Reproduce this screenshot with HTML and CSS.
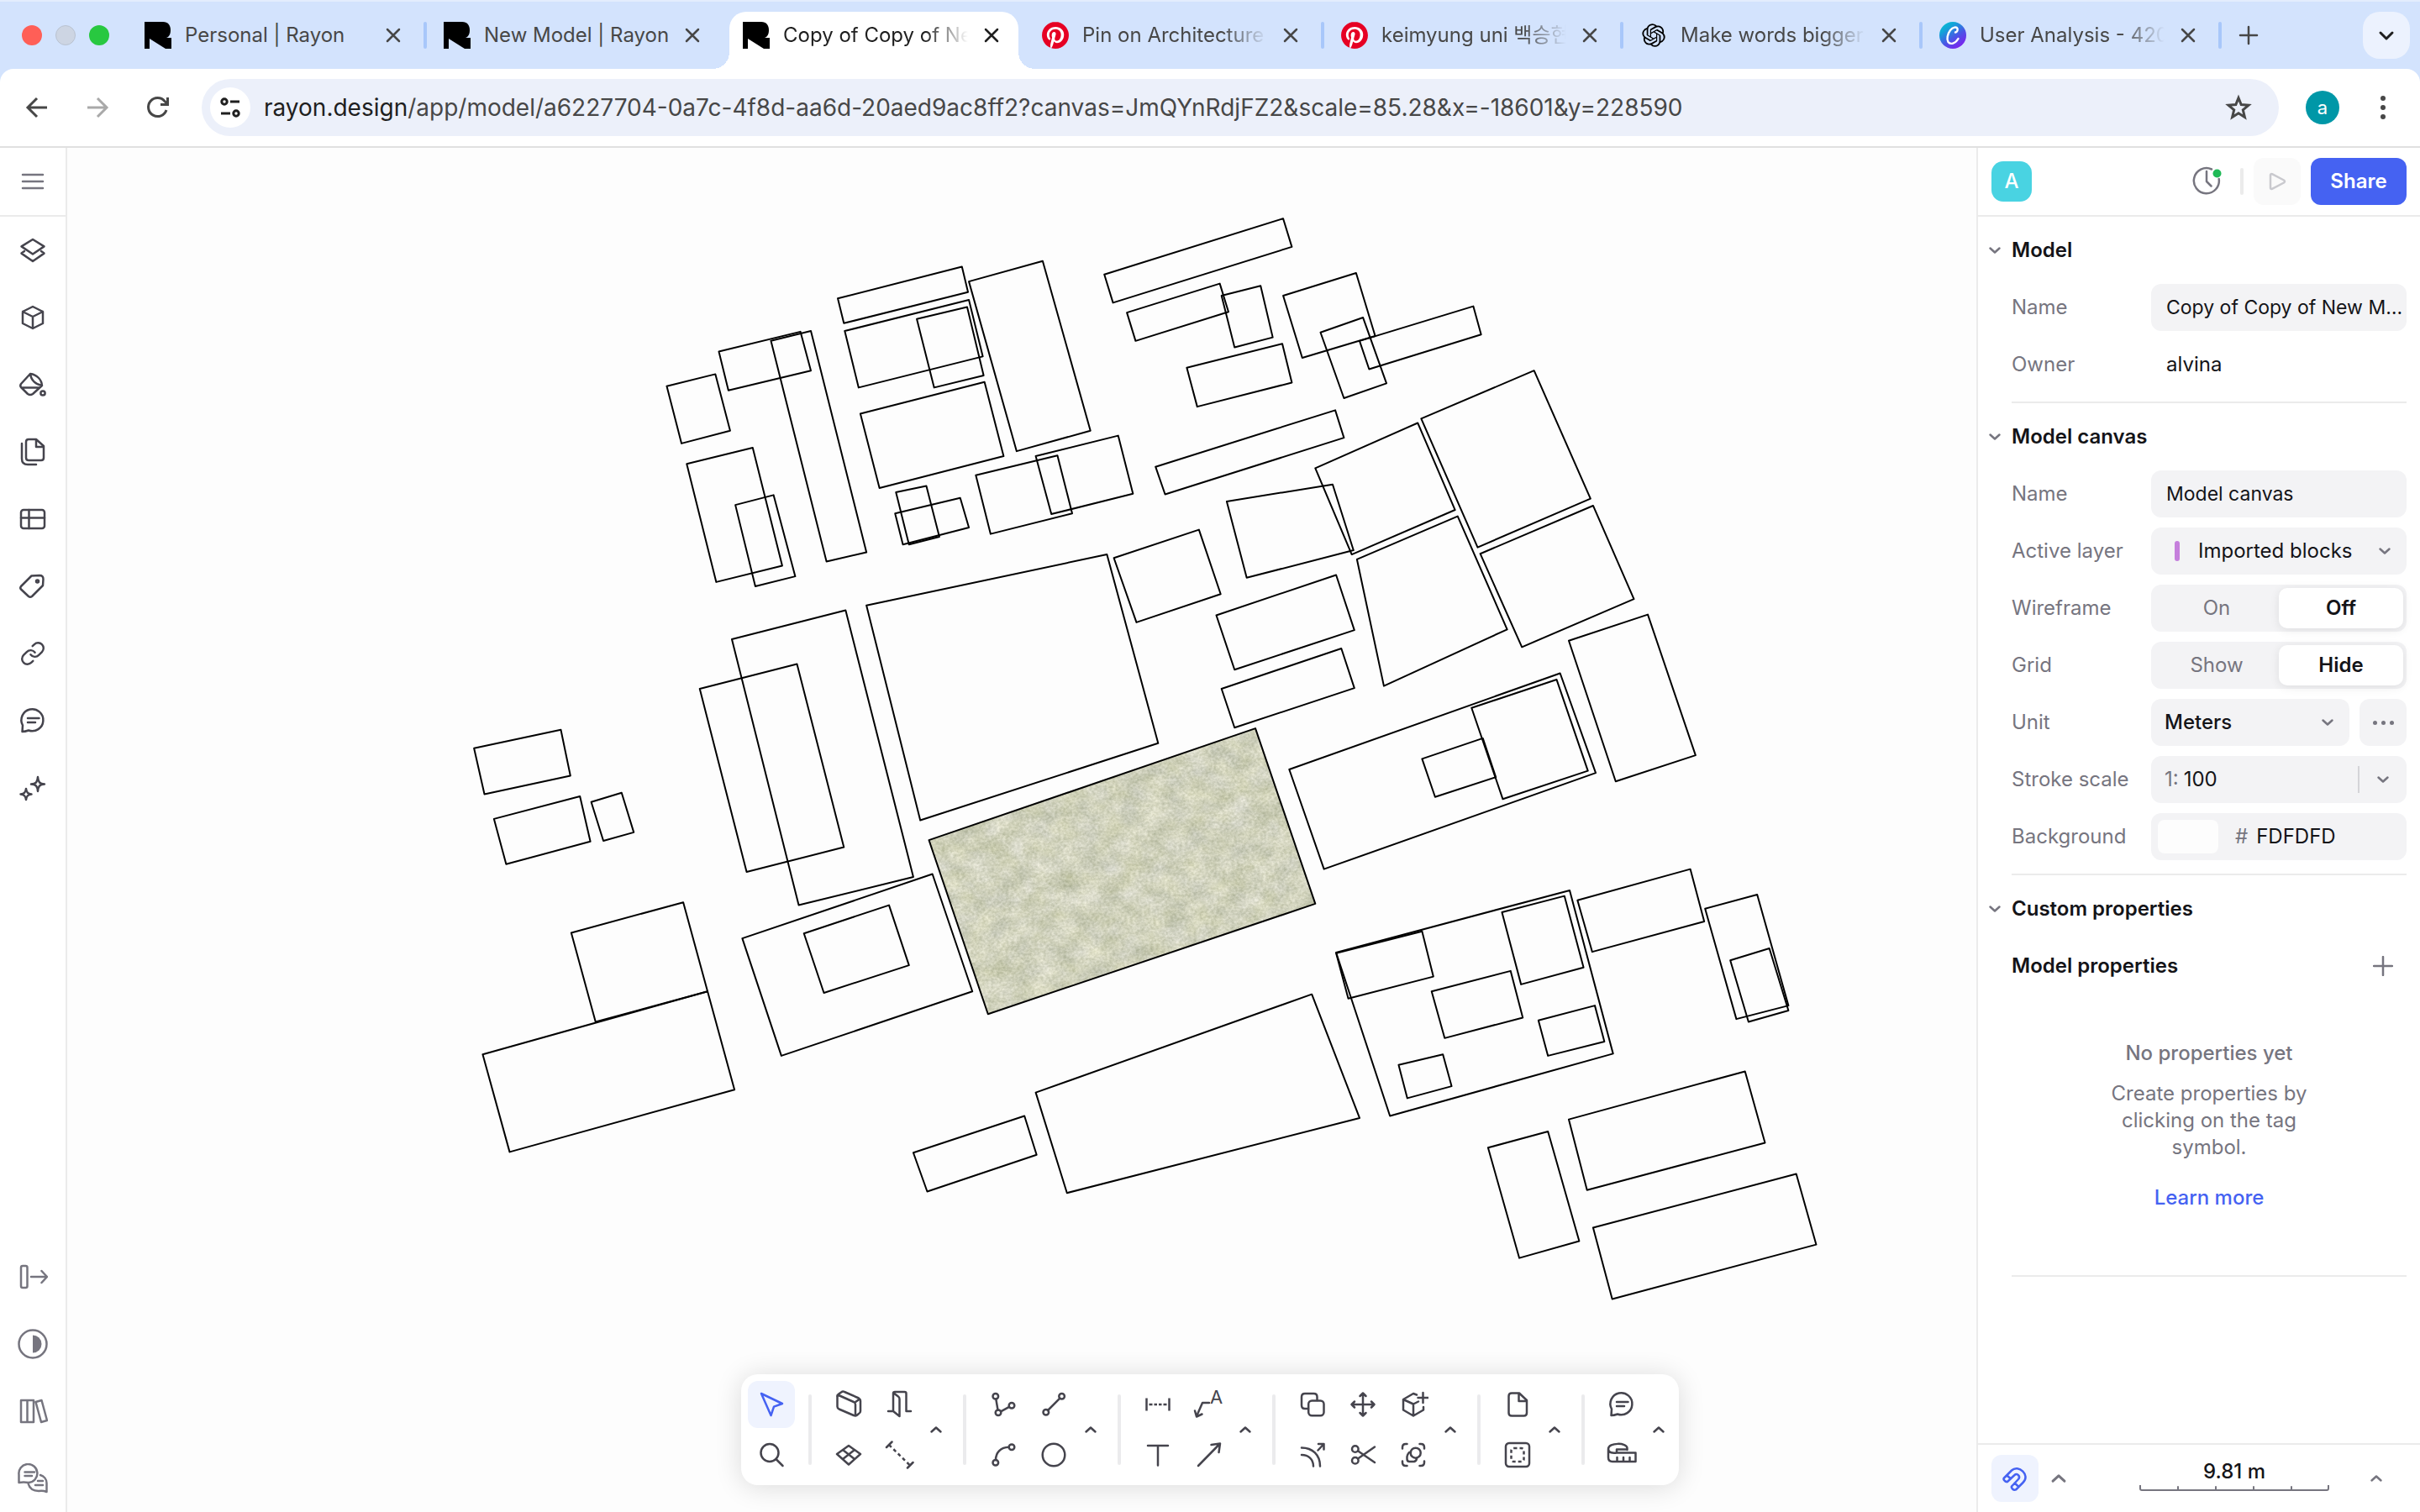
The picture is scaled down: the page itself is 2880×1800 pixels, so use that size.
FILE: index.html
```html
<!DOCTYPE html>
<html lang="en">
<head>
<meta charset="utf-8">
<title>Copy of Copy of New Model | Rayon</title>
<link rel="stylesheet" href="styles.css">
</head>
<body>
<svg class="defs" aria-hidden="true">
  <defs>
    <symbol id="i-close" viewBox="0 0 20 20"><path d="M3 3L17 17M17 3L3 17"/></symbol>
    <symbol id="i-down" viewBox="0 0 16 16"><path d="M2.500 5.500L8 10.500L13.500 5.500"/></symbol>
    <symbol id="i-up" viewBox="0 0 16 16"><path d="M2.500 10.500L8 5.500L13.500 10.500"/></symbol>
    <symbol id="i-chat" viewBox="0 0 36 36"><path d="M5.500 31L6 23.500A13 13 0 1 1 13 29.500Q9 31 5.500 31ZM12 15H25.500M12 20H21"/></symbol>
    <symbol id="i-rayon" viewBox="0 0 32 32"><path fill="#000" stroke="none" d="M0 0H22C28 0 31 4 31 10C31 15 29 18 26 19H32V32H25L6 20V32H0Z"/></symbol>
    <symbol id="i-pin" viewBox="0 0 24 24"><circle cx="12" cy="12" r="11.500" fill="#fff" stroke="none"/><path fill="#e60023" stroke="none" d="M12.017 0C5.396 0 .029 5.367.029 11.987c0 5.079 3.158 9.417 7.618 11.162-.105-.949-.199-2.403.041-3.439.219-.937 1.406-5.957 1.406-5.957s-.359-.72-.359-1.781c0-1.663.967-2.911 2.168-2.911 1.024 0 1.518.769 1.518 1.688 0 1.029-.653 2.567-.992 3.992-.285 1.193.6 2.165 1.775 2.165 2.128 0 3.768-2.245 3.768-5.487 0-2.861-2.063-4.869-5.008-4.869-3.41 0-5.409 2.562-5.409 5.199 0 1.033.394 2.143.889 2.741.099.12.112.225.085.345-.09.375-.293 1.199-.334 1.363-.053.225-.172.271-.401.165-1.495-.69-2.433-2.878-2.433-4.646 0-3.776 2.748-7.252 7.92-7.252 4.158 0 7.392 2.967 7.392 6.923 0 4.135-2.607 7.462-6.233 7.462-1.214 0-2.354-.629-2.758-1.379l-.749 2.848c-.269 1.045-1.004 2.352-1.498 3.146 1.123.345 2.306.535 3.55.535 6.607 0 11.985-5.365 11.985-11.987C23.97 5.39 18.592.026 11.985.026L12.017 0z"/></symbol>
    <linearGradient id="canva" x1="0" y1="0" x2="0.700" y2="1"><stop offset="0" stop-color="#00c9d0"/><stop offset="0.300" stop-color="#12a5d8"/><stop offset="0.650" stop-color="#4a55e6"/><stop offset="1" stop-color="#7d22ee"/></linearGradient>
  </defs>
</svg>

<header class="browser">
  <nav class="tabs" aria-label="Tabs">
    <div class="lights"><span class="light red"></span><span class="light grey"></span><span class="light green"></span></div>
    <div class="tab"><svg class="fav"><use href="#i-rayon"/></svg><span class="title">Personal | Rayon</span><button class="close" aria-label="Close tab"><svg class="ic20"><use href="#i-close"/></svg></button></div>
    <div class="tab bare"><svg class="fav"><use href="#i-rayon"/></svg><span class="title">New Model | Rayon</span><button class="close" aria-label="Close tab"><svg class="ic20"><use href="#i-close"/></svg></button></div>
    <div class="tab active"><svg class="fav"><use href="#i-rayon"/></svg><span class="title fade">Copy of Copy of New Model</span><button class="close" aria-label="Close tab"><svg class="ic20"><use href="#i-close"/></svg></button></div>
    <div class="tab"><svg class="fav"><use href="#i-pin"/></svg><span class="title fade">Pin on Architecture</span><button class="close" aria-label="Close tab"><svg class="ic20"><use href="#i-close"/></svg></button></div>
    <div class="tab"><svg class="fav"><use href="#i-pin"/></svg><span class="title fade">keimyung uni 백승현</span><button class="close" aria-label="Close tab"><svg class="ic20"><use href="#i-close"/></svg></button></div>
    <div class="tab"><svg class="fav" viewBox="-2 -2 28 28"><path fill="#000" stroke="none" d="M22.2819 9.8211a5.9847 5.9847 0 0 0-.5157-4.9108 6.0462 6.0462 0 0 0-6.5098-2.9A6.0651 6.0651 0 0 0 4.9807 4.1818a5.9847 5.9847 0 0 0-3.9977 2.9 6.0462 6.0462 0 0 0 .7427 7.0966 5.98 5.98 0 0 0 .511 4.9107 6.051 6.051 0 0 0 6.5146 2.9001A5.9847 5.9847 0 0 0 13.2599 24a6.0557 6.0557 0 0 0 5.7718-4.2058 5.9894 5.9894 0 0 0 3.9977-2.9001 6.0557 6.0557 0 0 0-.7475-7.0729zm-9.022 12.6081a4.4755 4.4755 0 0 1-2.8764-1.0408l.1419-.0804 4.7783-2.7582a.7948.7948 0 0 0 .3927-.6813v-6.7369l2.02 1.1686a.071.071 0 0 1 .038.052v5.5826a4.504 4.504 0 0 1-4.4945 4.4944zm-9.6607-4.1254a4.4708 4.4708 0 0 1-.5346-3.0137l.142.0852 4.783 2.7582a.7712.7712 0 0 0 .7806 0l5.8428-3.3685v2.3324a.0804.0804 0 0 1-.0332.0615L9.74 19.9502a4.4992 4.4992 0 0 1-6.1408-1.6464zM2.3408 7.8956a4.485 4.485 0 0 1 2.3655-1.9728V11.6a.7664.7664 0 0 0 .3879.6765l5.8144 3.3543-2.0201 1.1685a.0757.0757 0 0 1-.071 0l-4.8303-2.7865A4.504 4.504 0 0 1 2.3408 7.872zm16.5963 3.8558L13.1038 8.364 15.1192 7.2a.0757.0757 0 0 1 .071 0l4.8303 2.7913a4.4944 4.4944 0 0 1-.6765 8.1042v-5.6772a.79.79 0 0 0-.407-.667zm2.0107-3.0231l-.142-.0852-4.7735-2.7818a.7759.7759 0 0 0-.7854 0L9.409 9.2297V6.8974a.0662.0662 0 0 1 .0284-.0615l4.8303-2.7866a4.4992 4.4992 0 0 1 6.6802 4.66zM8.3065 12.863l-2.02-1.1638a.0804.0804 0 0 1-.038-.0567V6.0742a4.4992 4.4992 0 0 1 7.3757-3.4537l-.142.0805L8.704 5.459a.7948.7948 0 0 0-.3927.6813zm1.0976-2.3654l2.602-1.4998 2.6069 1.4998v2.9994l-2.5974 1.4997-2.6067-1.4997Z"/></svg><span class="title fade">Make words bigger</span><button class="close" aria-label="Close tab"><svg class="ic20"><use href="#i-close"/></svg></button></div>
    <div class="tab"><svg class="fav" viewBox="0 0 32 32"><circle cx="16" cy="16" r="16" fill="url(#canva)" stroke="none"/><path stroke="#fff" stroke-width="2.400" d="M19 12.500C21 12 22 10 21.500 8C20.500 5.500 16 6 13 10C9.500 14.500 8.500 21 10.500 24C13 27.500 19 26 22.500 20"/></svg><span class="title fade">User Analysis - 4201</span><button class="close" aria-label="Close tab"><svg class="ic20"><use href="#i-close"/></svg></button></div>
    <button class="newtab" aria-label="New tab"><svg class="ic24" viewBox="0 0 24 24"><path d="M12 2V22M2 12H22"/></svg></button>
    <button class="tabmenu" aria-label="Search tabs"><svg class="ic20" viewBox="0 0 20 20"><path d="M3 7L10 14L17 7"/></svg></button>
  </nav>
  <div class="bar">
    <button class="nav" aria-label="Back"><svg class="ic28" viewBox="0 0 28 28"><path d="M26 14H4M14 3L3 14L14 25"/></svg></button>
    <button class="nav off" aria-label="Forward"><svg class="ic28" viewBox="0 0 28 28"><path d="M2 14H24M14 3L25 14L14 25"/></svg></button>
    <button class="nav" aria-label="Reload"><svg class="ic28" viewBox="0 0 28 28"><path d="M24 17A11 11 0 1 1 22 6.500L25.500 10M25.500 2V10.500H17"/></svg></button>
    <div class="address">
      <button class="tune" aria-label="Site information"><svg class="ic28" viewBox="0 0 28 28"><circle cx="7" cy="7" r="3.200"/><path d="M14 7H25M3 21H14"/><circle cx="21" cy="21" r="3.200"/></svg></button>
      <a class="url" href="#"><b>rayon.design</b>/app/model/a6227704-0a7c-4f8d-aa6d-20aed9ac8ff2?canvas=JmQYnRdjFZ2&amp;scale=85.28&amp;x=-18601&amp;y=228590</a>
      <button class="star" aria-label="Bookmark"><svg class="ic32" viewBox="0 0 32 32"><path stroke-linejoin="miter" d="M16 4.500L19.200 12.600L28 13.300L21.300 18.900L23.400 27.500L16 22.800L8.600 27.500L10.700 18.900L4 13.300L12.800 12.600Z"/></svg></button>
    </div>
    <button class="profile">a</button>
    <button class="kebab" aria-label="Menu"><span></span><span></span><span></span></button>
  </div>
</header>

<div class="app">
  <aside class="rail">
    <button class="menu" aria-label="Menu"><svg class="ic36" viewBox="0 0 36 36"><path d="M6 10H30M6 18H30M6 26H30"/></svg></button>
    <div class="rail-group">
      <button aria-label="Layers"><svg class="ic36" viewBox="0 0 36 36"><path d="M18 5L31.500 13.400L18 22.500L4.500 13.400ZM8 19L4.500 21.600L18 31L31.500 21.600L28 19"/></svg></button>
      <button aria-label="Blocks"><svg class="ic36" viewBox="0 0 36 36"><path d="M18 5L30 11V25L18 31L6 25V11ZM6 11L18 17L30 11M18 17V31"/></svg></button>
      <button aria-label="Fills"><svg class="ic36" viewBox="0 0 36 36"><path d="M4 17L15 5C23 6 28.500 12 29 19L18 29Q15 31 12 29L4 21Q2.500 19 4 17ZM15 5C16 13 22 18 29 19M5 21.500H26"/><circle cx="30" cy="28" r="2.600"/></svg></button>
      <button aria-label="Pages"><svg class="ic36" viewBox="0 0 36 36"><path d="M13 3H22L31 11V25Q31 28 28 28H13Q10 28 10 25V6Q10 3 13 3ZM22 3V12H31M5 8V26Q5 33 12 33H22"/></svg></button>
      <button aria-label="Tables"><svg class="ic36" viewBox="0 0 36 36"><rect x="4" y="7" width="28" height="22" rx="3"/><path d="M13.500 7V29M4 16.500H32"/></svg></button>
      <button aria-label="Tags"><svg class="ic36" viewBox="0 0 36 36"><path d="M4 18L16.500 5.500L26 5Q30.500 5 30.500 9.500L30 17L17 30Q15 31.500 13 30L4 21.500Q2.500 20 4 18Z"/><circle cx="23.500" cy="12" r="1.500"/></svg></button>
      <button aria-label="Links"><svg class="ic36" viewBox="-2 -2 28 28"><g stroke-width="1.900"><path d="M10 13a5 5 0 0 0 7.540.54l3-3a5 5 0 0 0-7.070-7.070l-1.720 1.710M14 11a5 5 0 0 0-7.540-.54l-3 3a5 5 0 0 0 7.070 7.070l1.710-1.710"/></g></svg></button>
      <button aria-label="Comments"><svg class="ic36"><use href="#i-chat"/></svg></button>
      <button aria-label="Assistant"><svg class="ic36" viewBox="0 0 36 36"><path d="M24 5C24.500 11 26 13 32 13.500C26 14 24.500 16 24 22C23.500 16 22 14 16 13.500C22 13 23.500 11 24 5ZM10 19C10.500 23.500 12 25 16.500 25.500C12 26 10.500 27.500 10 32C9.500 27.500 8 26 3.500 25.500C8 25 9.500 23.500 10 19Z"/></svg></button>
    </div>
    <div class="rail-group low">
      <button aria-label="Collapse"><svg class="ic36" viewBox="0 0 36 36"><rect x="4" y="5" width="7.500" height="26" rx="2"/><path d="M16 18H35M28.500 11L35 18L28.500 25"/></svg></button>
      <button aria-label="Theme"><svg class="ic36" viewBox="0 0 36 36"><circle cx="18" cy="18" r="16.500"/><path fill="currentColor" stroke="none" d="M18 7.500A10.500 10.500 0 0 1 18 28.500Z"/></svg></button>
      <button aria-label="Library"><svg class="ic36" viewBox="0 0 36 36"><path d="M4 5H11.500V31H4ZM11.500 5H19V31H11.500ZM21.500 7L28.500 5L35 29L28 31Z"/></svg></button>
      <button aria-label="Community"><svg class="ic36" viewBox="0 0 36 36"><path d="M1.500 23V13.500A11 11 0 1 1 13 23Q7 22 1.500 23ZM8.500 10.500H20M8.500 15H17M27 14A10 10 0 0 1 34.500 23.500V34Q30 32 25 33Q15 33 12.500 24M24 21H30M21 26H30"/></svg></button>
    </div>
  </aside>

  <main class="canvas">
    <svg class="drawing" role="img" aria-label="Site plan">
      <defs>
        <filter id="grass" x="0" y="0" width="100%" height="100%" color-interpolation-filters="sRGB">
          <feTurbulence type="fractalNoise" baseFrequency="0.040" numOctaves="7" seed="21" result="a"/>
          <feColorMatrix in="a" type="matrix" values="0.320 0 0 0 0.655  0.290 0 0 0 0.675  0.340 0.120 0 0 0.505  0 0 0 0 1" result="soft"/>
          <feTurbulence type="fractalNoise" baseFrequency="0.300" numOctaves="3" seed="9" result="b"/>
          <feColorMatrix in="b" type="matrix" values="0.600 0 0 0 0.515  0.560 0 0 0 0.542  0.640 0 0 0 0.420  0 0 0 0 1" result="fine"/>
          <feComposite in="soft" in2="fine" operator="arithmetic" k1="0" k2="0.650" k3="0.350" k4="0" result="mix"/>
          <feComposite in="mix" in2="SourceAlpha" operator="in"/>
        </filter>
      </defs>
      <g transform="translate(480 64) scale(1.0332 0.8418)">
        <polygon points="528,903 904,745 973,993 596,1149" fill="#cfd1bb" stroke="none" filter="url(#grass)"/>
        <g class="plots">
          <polygon points="528,903 904,745 973,993 596,1149"/>
          <polygon points="226,261 282,244 299,324 243,342"/>
          <polygon points="286,212 380,184 392,239 297,267"/>
          <polygon points="346,197 392,183 456,496 410,509"/>
          <polygon points="249,371 325,348 359,515 283,538"/>
          <polygon points="305,429 349,415 374,530 328,544"/>
          <polygon points="423,137 566,92 573,128 430,172"/>
          <polygon points="431,183 574,139 590,219 447,263"/>
          <polygon points="514,166 572,149 591,246 534,263"/>
          <polygon points="449,300 592,255 614,360 471,405"/>
          <polygon points="574,113 659,84 714,324 629,353"/>
          <polygon points="582,387 676,359 693,441 599,470"/>
          <polygon points="651,360 746,331 763,413 669,442"/>
          <polygon points="490,411 525,402 540,474 505,485"/>
          <polygon points="489,441 564,419 574,461 498,485"/>
          <polygon points="730,103 936,24 946,64 740,143"/>
          <polygon points="756,157 863,116 873,156 766,197"/>
          <polygon points="865,133 910,119 924,192 880,206"/>
          <polygon points="936,133 1020,101 1042,190 958,221"/>
          <polygon points="979,185 1028,164 1055,257 1006,278"/>
          <polygon points="1024,197 1155,148 1164,188 1035,237"/>
          <polygon points="825,235 935,201 946,256 837,290"/>
          <polygon points="789,375 996,295 1006,334 800,414"/>
          <polygon points="871,424 993,400 1017,493 894,532"/>
          <polygon points="973,377 1091,313 1134,436 1015,499"/>
          <polygon points="1095,307 1225,239 1290,420 1160,489"/>
          <polygon points="1163,498 1293,430 1340,562 1211,630"/>
          <polygon points="1021,506 1137,445 1194,605 1052,685"/>
          <polygon points="741,504 839,464 864,555 767,595"/>
          <polygon points="859,585 997,528 1018,606 880,662"/>
          <polygon points="865,689 1003,632 1018,688 880,744"/>
          <polygon points="456,571 733,499 792,766 518,875"/>
          <polygon points="943,803 1255,667 1296,808 983,944"/>
          <polygon points="1153,716 1251,676 1287,805 1189,845"/>
          <polygon points="1096,788 1166,759 1181,814 1111,842"/>
          <polygon points="1265,621 1356,584 1411,783 1319,820"/>
          <polygon points="301,619 432,578 510,955 378,995"/>
          <polygon points="264,689 376,654 430,913 318,948"/>
          <polygon points="4,773 104,747 115,812 16,838"/>
          <polygon points="27,873 126,841 138,905 41,937"/>
          <polygon points="139,849 174,836 188,892 153,904"/>
          <polygon points="313,1042 532,951 578,1117 358,1208"/>
          <polygon points="384,1035 482,995 505,1080 407,1119"/>
          <polygon points="116,1034 245,991 273,1117 144,1160"/>
          <polygon points="14,1206 273,1117 304,1256 45,1344"/>
          <polygon points="510,1345 638,1293 652,1348 526,1400"/>
          <polygon points="651,1260 969,1121 1024,1296 687,1402"/>
          <polygon points="997,1062 1266,974 1316,1205 1059,1293"/>
          <polygon points="997,1063 1096,1032 1109,1096 1011,1127"/>
          <polygon points="1188,1005 1260,982 1282,1083 1210,1107"/>
          <polygon points="1107,1117 1198,1088 1212,1154 1122,1183"/>
          <polygon points="1230,1158 1295,1137 1306,1188 1241,1208"/>
          <polygon points="1069,1221 1120,1206 1130,1251 1079,1268"/>
          <polygon points="1275,988 1405,944 1421,1018 1292,1061"/>
          <polygon points="1422,1000 1482,980 1518,1137 1458,1156"/>
          <polygon points="1451,1073 1496,1056 1518,1144 1472,1160"/>
          <polygon points="1265,1298 1468,1230 1491,1331 1286,1398"/>
          <polygon points="1172,1338 1241,1315 1277,1470 1208,1494"/>
          <polygon points="1293,1451 1527,1375 1550,1475 1315,1552"/>
        </g>
      </g>
    </svg>
  </main>

  <aside class="panel">
    <div class="panel-head">
      <span class="avatar">A</span>
      <button class="history" aria-label="History"><svg class="ic36" viewBox="0 0 36 36"><path d="M24 3.500A15 15 0 1 0 32.700 15M18 6V18L23.500 23.500"/><circle cx="30.500" cy="8.500" r="5" fill="#1fb956" stroke="none"/></svg></button>
      <span class="vline"></span>
      <button class="play" aria-label="Present"><svg class="ic24" viewBox="0 0 24 24"><path d="M4 4.500Q4 2.500 6 3.200L20 10.500Q22 12 20 13.500L6 20.800Q4 21.500 4 19.500Z"/></svg></button>
      <button class="share">Share</button>
    </div>
    <div class="panel-body">
      <section>
        <h2><svg class="ic16"><use href="#i-down"/></svg>Model</h2>
        <div class="row"><label for="m-name">Name</label><input class="field" id="m-name" type="text" value="Copy of Copy of New Model"></div>
        <div class="row"><span class="label">Owner</span><span class="plain">alvina</span></div>
      </section>
      <section>
        <h2><svg class="ic16"><use href="#i-down"/></svg>Model canvas</h2>
        <div class="row"><label for="c-name">Name</label><input class="field" id="c-name" type="text" value="Model canvas"></div>
        <div class="row"><label for="layer">Active layer</label><div class="field pick"><span class="chip"></span><select id="layer"><option>Imported blocks</option></select><svg class="ic16"><use href="#i-down"/></svg></div></div>
        <div class="row" role="radiogroup" aria-label="Wireframe"><span class="label">Wireframe</span><div class="seg"><label><input type="radio" name="wire"><span>On</span></label><label><input type="radio" name="wire" checked><span>Off</span></label></div></div>
        <div class="row" role="radiogroup" aria-label="Grid"><span class="label">Grid</span><div class="seg"><label><input type="radio" name="grid"><span>Show</span></label><label><input type="radio" name="grid" checked><span>Hide</span></label></div></div>
        <div class="row"><label for="unit">Unit</label><div class="pair"><div class="field pick strong"><select id="unit"><option>Meters</option></select><svg class="ic16"><use href="#i-down"/></svg></div><button class="more" aria-label="Unit options"><span></span><span></span><span></span></button></div></div>
        <div class="row"><label for="stroke">Stroke scale</label><div class="field pick scale"><span class="pre">1:</span><input id="stroke" type="text" value="100"><button aria-label="Scale presets"><svg class="ic16"><use href="#i-down"/></svg></button></div></div>
        <div class="row"><label for="bg">Background</label><div class="field pick color"><span class="swatch"></span><span class="pre">#</span><input id="bg" type="text" value="FDFDFD"></div></div>
      </section>
      <section>
        <h2><svg class="ic16"><use href="#i-down"/></svg>Custom properties</h2>
        <div class="row-title"><h3>Model properties</h3><button aria-label="Add property"><svg class="ic24" viewBox="0 0 24 24"><path d="M12 1V23M1 12H23"/></svg></button></div>
        <div class="empty">
          <strong>No properties yet</strong>
          <p>Create properties by clicking on the tag symbol.</p>
          <a href="#">Learn more</a>
        </div>
      </section>
    </div>
    <footer class="panel-foot">
      <button class="snap" aria-label="Snapping"><svg class="ic36" viewBox="0 0 36 36"><path d="M5 17.500L14 8.500C22 1 37 14 27.500 23L19 31.500Q17 32.500 15 30.500Q13 28.500 14.500 27L22 19C25 15.500 20.500 11 17.500 14L9.500 21.500Q8 23 6 21Q3.500 19 5 17.500ZM8.500 14.500L13 18.500M17.500 23.500L22.500 28"/></svg></button>
      <button class="step" aria-label="Snap options"><svg class="ic20"><use href="#i-up"/></svg></button>
      <div class="ruler"><span>9.81 m</span><svg width="226" height="8" viewBox="0 0 226 8"><path d="M1 0V4Q1 6 3 6H223Q225 6 225 4V0M46 2V6M91 2V6M136 2V6M181 2V6"/></svg></div>
      <button class="step" aria-label="Ruler options"><svg class="ic16"><use href="#i-up"/></svg></button>
    </footer>
  </aside>
</div>

<div class="tools" role="toolbar" aria-label="Tools">
  <div class="grid one">
    <button class="on" aria-label="Select"><svg class="ic36" viewBox="0 0 36 36"><path d="M6 5L31 17L21 20.700L17.500 31Z"/></svg></button>
    <button aria-label="Find"><svg class="ic36" viewBox="0 0 36 36"><circle cx="16" cy="15.500" r="10.500"/><path d="M23.500 23L31.500 31"/></svg></button>
  </div>
  <i></i>
  <div class="set">
    <div class="grid two">
      <button aria-label="Wall"><svg class="ic36" viewBox="0 0 36 36"><path d="M4.500 9Q4 7 5.500 6L9 3.500Q11 2 13 3L30 10.500Q32 11.500 32 13.500V26Q32 28 30 29L27.500 31Q26 32 24 31L6.500 23.500Q4.500 22.500 4.500 20.500ZM5 6.500L24 15Q26 16 26 18V31M25.500 15.500L31 11.500"/></svg></button>
      <button aria-label="Door"><svg class="ic36" viewBox="0 0 36 36"><path d="M5 26H11V5Q11 3 13 3H24.500Q26.500 3 26.500 5V26H32M11 4L17 8.500Q18.500 9.500 18.500 11.500V32L11 26"/></svg></button>
      <button aria-label="Slab"><svg class="ic36" viewBox="0 0 36 36"><path d="M18 7L32 17L18 29.500L4 17ZM11 12L25 23M25 12L11 23"/></svg></button>
      <button aria-label="Guide"><svg class="ic36" viewBox="0 0 36 36"><path stroke-dasharray="4 3.500" stroke-linecap="butt" d="M6 6L31 30.500"/><path d="M3 9L9.500 2.500M28 33.500L34.500 27"/></svg></button>
    </div>
    <button class="step" aria-label="More building tools"><svg class="ic16"><use href="#i-up"/></svg></button>
  </div>
  <i></i>
  <div class="set">
    <div class="grid two">
      <button aria-label="Polyline"><svg class="ic36" viewBox="0 0 36 36"><circle cx="8.800" cy="8.300" r="3.300"/><circle cx="12" cy="27.700" r="3.300"/><circle cx="28" cy="19.300" r="3.300"/><path d="M9.300 11.500L11.500 24.500M15 26.300L25 20.800"/></svg></button>
      <button aria-label="Line"><svg class="ic36" viewBox="0 0 36 36"><circle cx="8.800" cy="27.300" r="3.300"/><circle cx="27.600" cy="8.300" r="3.300"/><path d="M11 25L25.300 10.700"/></svg></button>
      <button aria-label="Arc"><svg class="ic36" viewBox="0 0 36 36"><circle cx="8.800" cy="27.300" r="3.300"/><circle cx="28" cy="8.700" r="3.300"/><path d="M9 24C9 15 15 9 24.500 8.700"/></svg></button>
      <button aria-label="Circle"><svg class="ic36" viewBox="0 0 36 36"><circle cx="18" cy="18" r="13.300"/></svg></button>
    </div>
    <button class="step" aria-label="More drawing tools"><svg class="ic16"><use href="#i-up"/></svg></button>
  </div>
  <i></i>
  <div class="set">
    <div class="grid two">
      <button aria-label="Dimension"><svg class="ic36" viewBox="0 0 36 36"><path stroke-linecap="butt" d="M4.500 10.500V25.500M31.500 10.500V25.500M7.500 18H11.500M13.500 18H17M19 18H22.500M24.500 18H28.500"/></svg></button>
      <button aria-label="Leader"><svg class="ic36" viewBox="0 0 36 36"><path d="M19 16H11L4 32M2 25.500L4 32.500L10.500 29.500"/><text x="20" y="17" class="glyph">A</text></svg></button>
      <button aria-label="Text"><svg class="ic36" viewBox="0 0 36 36"><path d="M6 7H30M18 7V30.500"/></svg></button>
      <button aria-label="Arrow"><svg class="ic36" viewBox="0 0 36 36"><path d="M6 31L31.500 5M21.500 6L32 4.500L30.500 15"/></svg></button>
    </div>
    <button class="step" aria-label="More annotation tools"><svg class="ic16"><use href="#i-up"/></svg></button>
  </div>
  <i></i>
  <div class="set">
    <div class="grid three">
      <button aria-label="Duplicate"><svg class="ic36" viewBox="0 0 36 36"><path d="M13 23H9Q5 23 5 19V9Q5 5 9 5H19.500Q23.500 5 23.500 9V13"/><rect x="13.200" y="13.500" width="18.300" height="17.800" rx="4"/></svg></button>
      <button aria-label="Move"><svg class="ic36" viewBox="0 0 36 36"><path d="M18 4.500V31.500M4.500 18H31.500M14.500 8L18 4.500L21.500 8M14.500 28L18 31.500L21.500 28M8 14.500L4.500 18L8 21.500M28 14.500L31.500 18L28 21.500"/></svg></button>
      <button aria-label="New block"><svg class="ic36" viewBox="0 0 36 36"><path d="M22 6.500L18 5L6 12V24.500L18 31.500L30 24.500V21M6 12L18 17.500L24 14.500M18 17.500V31.500M29.500 4V16M23.500 10H35.500"/></svg></button>
      <button aria-label="Offset"><svg class="ic36" viewBox="0 0 36 36"><path d="M5 9.500C18 9.500 27 18 27 31.500M5 18C13 18 19 23 19 31.500M24.500 12.500L31.500 5M25 5H31.500V11.500"/></svg></button>
      <button aria-label="Cut"><svg class="ic36" viewBox="0 0 36 36"><circle cx="8.800" cy="11" r="3.800"/><circle cx="8.800" cy="24.700" r="3.800"/><path d="M12 13.300L32 27M12 22.500L32 8.500"/></svg></button>
      <button aria-label="Group"><svg class="ic36" viewBox="0 0 36 36"><path d="M5 10.500V9Q5 5 9 5H10.500M25.500 5H27Q31 5 31 9V10.500M31 25.500V27Q31 31 27 31H25.500M10.500 31H9Q5 31 5 27V25.500"/><circle cx="20.700" cy="15.700" r="6"/><path d="M15 15H13Q10.500 18 10.500 20V23Q10.500 26 13.500 26H19Q22 25 22 22"/></svg></button>
    </div>
    <button class="step" aria-label="More edit tools"><svg class="ic16"><use href="#i-up"/></svg></button>
  </div>
  <i></i>
  <div class="set">
    <div class="grid one">
      <button aria-label="Page"><svg class="ic36" viewBox="0 0 36 36"><path d="M11 4.500H20L29 13V28Q29 31.500 25.500 31.500H11Q7.500 31.500 7.500 28V8Q7.500 4.500 11 4.500ZM19.500 5V14H29"/></svg></button>
      <button aria-label="Frame"><svg class="ic36" viewBox="0 0 36 36"><rect x="4" y="4" width="28" height="28" rx="4"/><rect x="10.500" y="10" width="15" height="16" rx="3" stroke-dasharray="4 3" stroke-linecap="butt"/></svg></button>
    </div>
    <button class="step" aria-label="More page tools"><svg class="ic16"><use href="#i-up"/></svg></button>
  </div>
  <i></i>
  <div class="set">
    <div class="grid one">
      <button aria-label="Comment"><svg class="ic36"><use href="#i-chat"/></svg></button>
      <button aria-label="Measure"><svg class="ic36" viewBox="0 0 36 36"><path d="M2 11C2 3 24.500 3 24.500 10V12M2 11C2 16 8 16 12 15.500H34.500V26H7Q2 26 2 21ZM12 15V11.500H24.500M12.500 26V21M20 26V21M27.500 26V21"/></svg></button>
    </div>
    <button class="step" aria-label="More review tools"><svg class="ic16"><use href="#i-up"/></svg></button>
  </div>
</div>
</body>
</html>
```
FILE: styles.css
```css
* { box-sizing: border-box; }

body {
  margin: 0;
  height: 100vh;
  display: flex;
  flex-direction: column;
  font-family: Inter, "Noto Sans CJK KR", sans-serif;
  font-size: 24px;
  line-height: 32px;
  color: #141418;
  background: #fff;
  overflow: hidden;
}

button, input, select {
  font: inherit;
  color: inherit;
  border: 0;
  padding: 0;
  margin: 0;
  background: none;
  outline: 0;
}
button { display: flex; align-items: center; justify-content: center; flex: none; }
a { text-decoration: none; }
h2, h3, p { margin: 0; font-size: 24px; }

svg { fill: none; stroke: currentColor; stroke-width: 2.5; stroke-linecap: round; stroke-linejoin: round; flex: none; }
.defs { position: absolute; width: 0; height: 0; }
.ic16 { width: 16px; height: 16px; }
.ic20 { width: 20px; height: 20px; }
.ic24 { width: 24px; height: 24px; }
.ic28 { width: 28px; height: 28px; }
.ic32 { width: 32px; height: 32px; }
.ic36 { width: 36px; height: 36px; }

/* browser chrome */
.browser { background: #d3e3fd; border-top: 2px solid #e3edfd; color: #474747; }
.tabs { display: flex; align-items: center; height: 80px; padding-right: 12px; }
.lights { display: flex; gap: 16px; width: 152px; padding-left: 26px; }
.light { width: 24px; height: 24px; border-radius: 50%; }
.red { background: #ff5f57; }
.grey { background: #cdd5e3; border: 1px solid #b9c2d0; }
.green { background: #28c840; }
.tab {
  position: relative;
  display: flex;
  align-items: center;
  width: 356px;
  height: 68px;
  margin-top: 12px;
  padding: 0 8px 12px 20px;
}
.tab::after { content: ""; position: absolute; right: 0; top: 12px; width: 4px; height: 32px; border-radius: 2px; background: #a8c7fa; }
.tab.bare::after { display: none; }
.tab.active {
  color: #1f1f1f;
  background: #fff;
  width: 344px;
  margin-left: 4px;
  margin-right: 8px;
  padding-left: 16px;
  padding-right: 0;
  border-radius: 20px 20px 0 0;
}
.tab.active::before, .tab.active::after {
  content: "";
  position: absolute;
  top: auto;
  bottom: 0;
  width: 20px;
  height: 20px;
  border-radius: 0;
}
.tab.active::before { left: -20px; background: radial-gradient(circle at 0 0, transparent 20px, #fff 20px); }
.tab.active::after { right: -20px; background: radial-gradient(circle at 100% 0, transparent 20px, #fff 20px); }
.fav { width: 32px; height: 32px; margin-right: 16px; }
.title { flex: none; width: 224px; white-space: nowrap; overflow: hidden; }
.fade { -webkit-mask-image: linear-gradient(90deg, #000 168px, transparent 220px); mask-image: linear-gradient(90deg, #000 168px, transparent 220px); }
.close { width: 48px; height: 32px; }
.newtab { width: 64px; height: 56px; }
.tabmenu { width: 56px; height: 56px; margin-left: auto; border-radius: 20px; background: #ecf2fe; color: #1f1f1f; }
.tabmenu svg { stroke-width: 3; }

.bar {
  display: flex;
  align-items: center;
  height: 94px;
  padding: 0 24px 0 8px;
  background: #fff;
  border-bottom: 2px solid #e0e0e0;
  border-radius: 16px 16px 0 0;
}
.nav { width: 72px; height: 72px; }
.bar svg { stroke-width: 3; stroke-linecap: butt; stroke-linejoin: miter; }
.off { color: #a9a9a9; }
.address {
  flex: 1;
  display: flex;
  align-items: center;
  height: 68px;
  margin-left: 16px;
  padding: 0 24px 0 10px;
  border-radius: 34px;
  background: #ecf0fa;
}
.tune { width: 48px; height: 48px; border-radius: 50%; background: #fff; color: #1f1f1f; }
.url { flex: 1; margin-left: 16px; font-size: 28px; line-height: 36px; color: #474747; white-space: nowrap; }
.url b { font-weight: 400; color: #1f1f1f; }
.star { width: 48px; height: 48px; }
.profile { width: 40px; height: 40px; margin: 0 32px; border-radius: 50%; background: #0097a7; color: #fff; font-size: 22px; }
.kebab { width: 40px; height: 48px; flex-direction: column; gap: 5px; }
.kebab span { width: 6px; height: 6px; border-radius: 50%; background: #474747; }

/* application */
.app { flex: 1; display: flex; min-height: 0; }
.rail { display: flex; flex-direction: column; width: 80px; border-right: 2px solid #ebebeb; color: #45444d; }
.menu { height: 82px; border-bottom: 2px solid #ebebeb; color: #76757f; }
.rail-group { display: flex; flex-direction: column; }
.rail-group button { height: 80px; }
.low { margin-top: auto; color: #76757f; }
.canvas { flex: 1; min-width: 0; background: #fdfdfd; }
.drawing { display: block; width: 100%; height: 100%; }
.plots polygon { stroke: #000; stroke-width: 2; vector-effect: non-scaling-stroke; }

.panel { display: flex; flex-direction: column; width: 528px; border-left: 2px solid #ebebeb; }
.panel-head { display: flex; align-items: center; height: 82px; padding: 0 16px; border-bottom: 2px solid #ebebeb; }
.avatar { width: 48px; height: 48px; border-radius: 14px; background: #49d3e2; color: #fff; font-weight: 500; line-height: 48px; text-align: center; }
.history { margin-left: auto; margin-right: 22px; color: #76757f; }
.vline { width: 4px; height: 32px; border-radius: 2px; background: #ebebeb; }
.play { width: 56px; height: 56px; margin: 0 12px; border-radius: 12px; background: #fafafa; color: #c9c9ce; }
.share { width: 114px; height: 56px; border-radius: 12px; background: #4562f2; color: #fff; font-weight: 600; }

.panel-body { flex: 1; }
section { margin: 0 16px 0 40px; padding: 12px 0 16px; border-bottom: 2px solid #ebebeb; display: flex; flex-direction: column; gap: 12px; }
h2 { display: flex; align-items: center; gap: 12px; height: 56px; margin-left: -28px; font-weight: 600; }
h2 svg { color: #76757f; }
.row { display: grid; grid-template-columns: 166px 1fr; align-items: center; height: 56px; }
.row > label, .label { color: #76757f; }
.field { width: 100%; min-width: 0; height: 56px; padding: 0 0 0 18px; border-radius: 12px; background: #f3f3f5; text-overflow: ellipsis; }
input.field { font-size: 23px; }
.plain { padding-left: 18px; }
.pick { display: flex; align-items: center; padding: 0 18px 0 16px; color: #141418; }
.pick > svg, .pick button { color: #76757f; }
.pick input, .pick select { flex: 1; min-width: 0; appearance: none; }
.chip { width: 6px; height: 24px; margin: 0 22px 0 12px; border-radius: 3px; background: #c57fdc; }
.strong { font-weight: 500; }
.pair { display: flex; gap: 12px; }
.pair .field { flex: 1; }
.more { width: 56px; height: 56px; gap: 5px; border-radius: 12px; background: #f3f3f5; }
.more span { width: 5px; height: 5px; border-radius: 50%; background: #76757f; }
.seg { display: grid; grid-template-columns: 1fr 1fr; height: 56px; padding: 4px; border-radius: 12px; background: #f3f3f5; }
.seg label { position: relative; text-align: center; color: #76757f; }
.seg input { position: absolute; inset: 0; opacity: 0; }
.seg span { display: block; line-height: 48px; border-radius: 10px; }
.seg input:checked + span { background: #fff; color: #141418; font-weight: 600; box-shadow: 0 2px 12px rgba(0, 0, 0, 0.09); }
.pre { color: #76757f; margin-right: 6px; }
.scale { padding-right: 0; }
.scale button { width: 58px; height: 32px; border-left: 2px solid #d4d4d8; }
.color { padding-left: 8px; }
.swatch { width: 72px; height: 40px; margin-right: 20px; border-radius: 8px; background: #fdfdfd; }
.color .pre { margin-right: 10px; }
.row-title { display: flex; align-items: center; justify-content: space-between; height: 56px; }
.row-title h3 { font-weight: 600; }
.row-title button { width: 56px; height: 56px; color: #76757f; }
.empty { display: flex; flex-direction: column; align-items: center; padding: 48px 0 60px; color: #76757f; text-align: center; }
.empty strong { font-weight: 500; }
.empty p { width: 256px; margin: 16px 0 28px; }
.empty a { color: #4562f2; font-weight: 500; }

.panel-foot { display: flex; align-items: center; height: 82px; padding: 0 32px 0 16px; border-top: 2px solid #ebebeb; }
.snap { width: 56px; height: 56px; border-radius: 12px; background: #eff3fe; color: #4562f2; }
.panel-foot .step { width: 40px; margin-left: 4px; color: #76757f; }
.ruler { display: flex; flex-direction: column; align-items: center; margin: 0 auto 0 76px; padding-bottom: 8px; color: #76757f; }
.ruler span { color: #141418; font-weight: 500; }
.ruler svg { stroke-width: 2; }

/* floating toolbar */
.tools {
  position: absolute;
  left: 50%;
  bottom: 32px;
  transform: translateX(-50%);
  display: flex;
  align-items: center;
  gap: 16px;
  padding: 8px;
  border-radius: 20px;
  background: #fff;
  color: #45444d;
  box-shadow: 0 2px 32px rgba(0, 0, 0, 0.14);
}
.tools i { width: 4px; height: 84px; border-radius: 2px; background: #ebebed; }
.set { display: flex; align-items: center; }
.grid { display: grid; gap: 4px; grid-template-columns: 56px; }
.two { grid-template-columns: 56px 56px; }
.three { grid-template-columns: 56px 56px 56px; }
.grid button { width: 56px; height: 56px; border-radius: 12px; }
.on { background: #eff3fe; color: #4562f2; }
.step { width: 32px; height: 56px; }
.glyph { font-size: 22px; fill: currentColor; stroke: none; }
```
